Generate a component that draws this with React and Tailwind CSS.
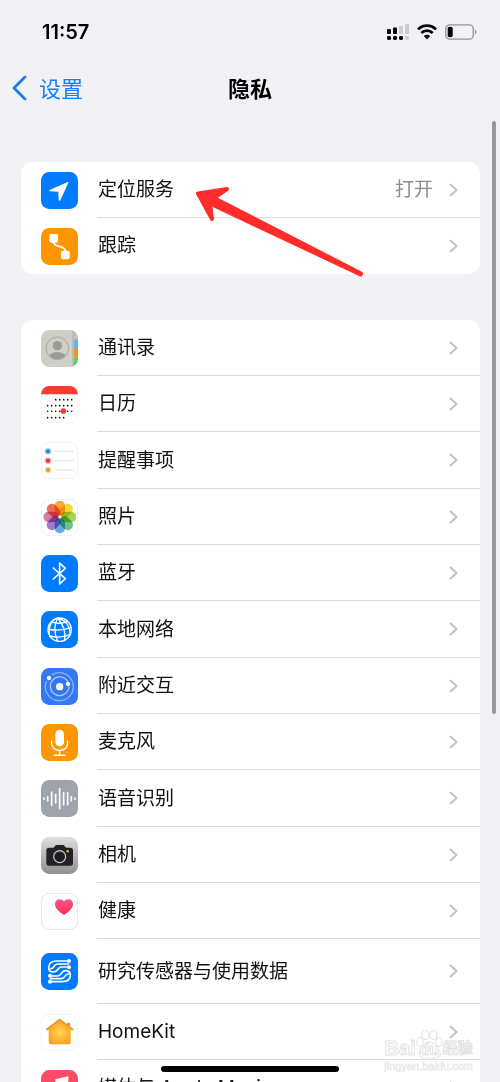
import React from "react";

/* Every app icon is drawn on a 111 x 111 canvas. */
function Tile({ fill, border, children }) {
  return (
    <svg viewBox="0 0 111 111" className="size-[37px] shrink-0" aria-hidden="true">
      <rect x={border ? 1 : 0} y={border ? 1 : 0} width={border ? 109 : 111} height={border ? 109 : 111} rx="25" fill={fill} stroke={border || "none"} strokeWidth="2.5" />
      {children}
    </svg>
  );
}

const LocationIcon = () => (
  <Tile fill="#007aff">
    <path d="M80 30 L26 54 Q23 57 27 58 L52 59 L53 84 Q54 88 58 85 L82 33 Q83 29 80 30Z" fill="#fff" />
  </Tile>
);

const TrackingIcon = () => (
  <Tile fill="#ff9500">
    <rect x="25" y="18" width="26" height="26" rx="6" fill="#fff" />
    <rect x="60" y="68" width="26" height="26" rx="6" fill="#fff" />
    <path d="M38 42 C38 62 72 48 73 70" fill="none" stroke="#fff" strokeWidth="5.5" />
  </Tile>
);

const ContactsIcon = () => (
  <Tile fill="#d0cfc5">
    <clipPath id="contacts-tile"><rect width="111" height="111" rx="25" /></clipPath>
    <clipPath id="contacts-face"><circle cx="49" cy="55" r="32" /></clipPath>
    <g clipPath="url(#contacts-tile)">
      <rect x="96" width="15" height="28" fill="#c2c1b6" />
      <rect x="97" y="28" width="14" height="28" fill="#5bb8f5" />
      <rect x="97" y="56" width="14" height="27" fill="#ff9218" />
      <rect x="97" y="83" width="14" height="28" fill="#52cf68" />
      <rect x="94" width="3" height="111" fill="#b9b8ae" />
    </g>
    <circle cx="49" cy="55" r="34" fill="#d0cfc7" stroke="#9b9b96" strokeWidth="2.5" />
    <g clipPath="url(#contacts-face)" fill="#9b9b98">
      <circle cx="49" cy="47" r="14" />
      <ellipse cx="49" cy="83" rx="27" ry="17" />
    </g>
  </Tile>
);

const CALENDAR_DOTS = [
  [41, [44, 56, 68, 80, 92]],
  [59, [20, 32, 44, 56, 68, 80, 92]],
  [76, [20, 32, 44, 56, 80, 92]],
  [95, [20, 32, 44, 56, 68]],
];

const CalendarIcon = () => (
  <Tile fill="#fff" border="#f0f0f0">
    <path d="M0 25 A25 25 0 0 1 25 0 H86 A25 25 0 0 1 111 25Z" fill="#fb3b30" />
    {CALENDAR_DOTS.map(([y, xs]) => xs.map((x) => <circle key={`${x}-${y}`} cx={x} cy={y} r="2.5" fill="#111" />))}
    <circle cx="67" cy="75" r="8.5" fill="#f43c35" />
  </Tile>
);

const RemindersIcon = () => (
  <Tile fill="#fff" border="#ececec">
    {[[28, "#2586dc"], [56, "#e5383b"], [84, "#f0a020"]].map(([y, color]) => (
      <g key={y}>
        <circle cx="21" cy={y} r="10" fill={color} opacity="0.35" />
        <circle cx="21" cy={y} r="6.5" fill={color} />
        <path d={`M42 ${y}H98`} stroke="#d9d9dc" strokeWidth="2.5" />
      </g>
    ))}
  </Tile>
);

const PETALS = ["#fb9a1c", "#ecd914", "#98cb3b", "#52b878", "#5298dc", "#8c6cbf", "#cb639b", "#f15540"];

const PhotosIcon = () => (
  <Tile fill="#fff" border="#ececec">
    {PETALS.map((color, i) => (
      <rect key={color} x="41" y="5" width="31" height="45" rx="15" fill={color} opacity="0.86" transform={`rotate(${i * 45} 56.5 54)`} style={{ mixBlendMode: "multiply" }} />
    ))}
  </Tile>
);

const BluetoothIcon = () => (
  <Tile fill="#007aff">
    <path d="M37 39 L73 71 L56 87 V24 L73 40 L37 72" fill="none" stroke="#fff" strokeWidth="5" strokeLinejoin="round" strokeLinecap="round" />
  </Tile>
);

const NetworkIcon = () => (
  <Tile fill="#007aff">
    <g fill="none" stroke="#fff" strokeWidth="4">
      <circle cx="56" cy="56" r="35" />
      <path d="M50 21 C38 42 39 65 50 91 M50 21 C66 39 76 66 70 88 M50 21 C27 30 20 55 27 76 M50 21 C74 27 88 46 87 71" />
      <path d="M31 32 Q54 42 80 31 M21 54 Q53 63 91 49 M25 75 Q58 83 87 71" />
    </g>
  </Tile>
);

const NearbyIcon = () => (
  <Tile fill="#3478f6">
    <g fill="none" strokeWidth="4" strokeLinecap="round">
      <path d="M34 20 A42 42 0 1 1 16 41" stroke="#8db5fa" />
      <path d="M80 40 A28 28 0 1 0 84 57" stroke="#a8c7fb" />
    </g>
    <g fill="#fff">
      <circle cx="56" cy="56" r="11" />
      <circle cx="24" cy="30" r="6.5" />
      <circle cx="81" cy="48" r="6.5" />
    </g>
  </Tile>
);

const MicrophoneIcon = () => (
  <Tile fill="#ff9500">
    <rect x="43" y="17" width="26" height="50" rx="13" fill="#fff" />
    <path d="M32 52 V57 C32 87 80 87 80 57 V52 M56 80 V93 M40 94 H72" fill="none" stroke="#fff" strokeWidth="4.5" strokeLinecap="round" />
  </Tile>
);

const WAVE = [[9, 2], [20, 6], [32, 20], [44, 13], [56, 30], [68, 18], [80, 18], [91, 6], [102, 2]];

const SpeechIcon = () => (
  <Tile fill="#9fa3ae">
    {WAVE.map(([x, h]) => (
      <path key={x} d={`M${x} ${56 - h}V${56 + h}`} stroke="#fff" strokeWidth="5" strokeLinecap="round" />
    ))}
  </Tile>
);

const CameraIcon = () => (
  <Tile fill="url(#camera-bg)">
    <linearGradient id="camera-bg" x1="0" y1="0" x2="0" y2="1">
      <stop stopColor="#dedee1" />
      <stop offset="1" stopColor="#909094" />
    </linearGradient>
    <path d="M24 32 H36 Q40 32 42 27 Q43 24 47 24 H66 Q69 24 71 28 Q73 32 77 32 H88 Q96 32 96 40 V78 Q96 86 88 86 H24 Q16 86 16 78 V40 Q16 32 24 32Z" fill="#222225" />
    <circle cx="56" cy="59" r="18" fill="#28282b" stroke="#d0d0d2" strokeWidth="3.5" />
    <circle cx="56" cy="59" r="12" fill="#1d1d20" />
    <circle cx="80" cy="43" r="3.8" fill="#f4ad19" />
  </Tile>
);

const HealthIcon = () => (
  <Tile fill="#fff" border="#dedee0">
    <linearGradient id="heart" x1="0" y1="0" x2="0" y2="1">
      <stop stopColor="#fb568f" />
      <stop offset="1" stopColor="#ff2d46" />
    </linearGradient>
    <path d="M69 66 C54 56 42 46 42 33 C42 17 61 14 69 26 C77 14 96 17 96 33 C96 46 84 56 69 66Z" fill="url(#heart)" />
  </Tile>
);

const ResearchIcon = () => (
  <Tile fill="#007aff">
    <g fill="none" stroke="#fff" strokeWidth="5" strokeLinecap="round">
      <path d="M83 24 H48 C29 24 23 34 23 44 C23 55 31 57 38 57 C52 57 48 42 62 42 H83" />
      <path d="M83 33 H52 C34 33 43 48 29 47" />
      <path d="M28 86 H63 C82 86 88 76 88 66 C88 55 80 53 73 53 C59 53 63 69 49 69 H28" />
      <path d="M28 77 H59 C77 77 68 62 82 63" />
    </g>
    <g fill="#fff">
      <circle cx="84" cy="24" r="6" />
      <circle cx="84" cy="43" r="6" />
      <circle cx="27" cy="68" r="6" />
      <circle cx="27" cy="86" r="6" />
    </g>
  </Tile>
);

const HomeIcon = () => (
  <Tile fill="#fff" border="#f0f0f0">
    <radialGradient id="house" cx="0.5" cy="0.55" r="0.55">
      <stop stopColor="#ffd75a" />
      <stop offset="0.55" stopColor="#ffb52d" />
      <stop offset="1" stopColor="#f69a20" />
    </radialGradient>
    <path d="M78 26 H87 V42 L78 34Z" fill="#e69532" />
    <path d="M53 16 Q56 14 59 16 L97 46 Q95 51 89 48 V83 Q89 91 81 91 H31 Q23 91 23 83 V48 Q17 51 15 46Z" fill="url(#house)" />
    <path d="M17 46 L56 17 L95 46" fill="none" stroke="#e79a3b" strokeWidth="5" strokeLinecap="round" strokeLinejoin="round" />
  </Tile>
);

const MusicIcon = () => (
  <Tile fill="#fb4b66">
    <path d="M43 28 L82 19 V74 A12 10 0 1 1 75 64 V39 L50 45 V82 A12 10 0 1 1 43 72Z" fill="#fff" />
  </Tile>
);

const LOCATION_ROWS = [
  { label: "定位服务", icon: LocationIcon, value: "打开" },
  { label: "跟踪", icon: TrackingIcon },
];

const APP_ROWS = [
  { label: "通讯录", icon: ContactsIcon },
  { label: "日历", icon: CalendarIcon },
  { label: "提醒事项", icon: RemindersIcon },
  { label: "照片", icon: PhotosIcon },
  { label: "蓝牙", icon: BluetoothIcon },
  { label: "本地网络", icon: NetworkIcon },
  { label: "附近交互", icon: NearbyIcon },
  { label: "麦克风", icon: MicrophoneIcon },
  { label: "语音识别", icon: SpeechIcon },
  { label: "相机", icon: CameraIcon },
  { label: "健康", icon: HealthIcon },
  { label: "研究传感器与使用数据", icon: ResearchIcon, tall: true },
  { label: "HomeKit", icon: HomeIcon },
  { label: "媒体与 Apple Music", icon: MusicIcon },
];

function SettingsList({ rows }) {
  return (
    <ul className="ml-[21px] mr-5 overflow-hidden rounded-xl bg-white">
      {rows.map(({ label, icon: Icon, value, tall }) => (
        <li key={label} className={tall ? "group h-[65px]" : "group h-14 nth-[3n]:h-[57px]"}>
          <a href="#" className="flex h-full items-center pl-5">
            <Icon />
            <span className="ml-[19px] flex h-full flex-1 items-center border-b border-[#dcdcdf] pr-[22px] group-last:border-transparent">
              <span className="flex-1 pl-px pt-0.5 text-[19px] text-[#111]">{label}</span>
              {value && <span className="mr-4 pt-0.5 text-[19px] text-[#8a8a8e]">{value}</span>}
              <svg viewBox="0 0 9 14" className="h-3.5 w-[9px]" fill="none" stroke="#c2c2c6" strokeWidth="2" aria-hidden="true">
                <path d="M1 1l6.5 6L1 13" />
              </svg>
            </span>
          </a>
        </li>
      ))}
    </ul>
  );
}

function StatusBar() {
  return (
    <div className="flex h-16 items-center justify-between pl-[42px] pr-[23px]">
      <span className="font-[Inter] text-xl font-semibold text-black">11:57</span>
      <div className="flex items-center gap-2">
        <svg viewBox="0 0 22 16" className="h-4 w-[22px]" aria-hidden="true">
          <g fill="#050505">
            <rect y="5" width="4" height="5" rx="1" />
            <rect x="6" y="3.5" width="4" height="6.5" rx="1" />
            <rect y="12" width="4" height="4" rx="1.4" />
            <rect x="6" y="12" width="4" height="4" rx="1.4" />
            <rect x="12" y="12" width="4" height="4" rx="1.4" />
          </g>
          <g fill="#cdcdd1">
            <rect x="12" y="2" width="4" height="8" rx="1" />
            <rect x="18" y="0" width="4" height="10" rx="1" />
            <rect x="18" y="12" width="4" height="4" rx="1.4" />
          </g>
        </svg>
        <svg viewBox="0 0 20 16" className="h-4 w-5" fill="none" stroke="#050505" strokeWidth="2.7" aria-hidden="true">
          <path d="M1 5.4C6 .4 14 .4 19 5.4M4.3 9C7.5 5.8 12.5 5.8 15.7 9" />
          <path d="M10 15.5L6.8 12C8.6 10.3 11.4 10.3 13.2 12Z" fill="#050505" stroke="none" />
        </svg>
        <svg viewBox="0 0 32 16" className="h-4 w-8" aria-hidden="true">
          <rect x=".8" y=".8" width="27.5" height="14.4" rx="4" fill="none" stroke="#929297" strokeWidth="1.3" />
          <rect x="2.7" y="2.8" width="5" height="10.4" rx="1.8" fill="#050505" />
          <path d="M30 5.5Q33 8 30 10.5Z" fill="#929297" />
        </svg>
      </div>
    </div>
  );
}

function Watermark() {
  return (
    <div className="pointer-events-none absolute bottom-2.5 right-[27px] flex flex-col items-center font-['Liberation_Sans','Noto_Sans_CJK_SC',sans-serif] text-white" aria-hidden="true">
      <div className="flex items-center text-xl leading-6 font-bold [-webkit-text-stroke:1px_#e2e2e4]">
        <span>Bai</span>
        <span className="relative flex h-6 w-[27px] items-center justify-center text-base">
          <svg viewBox="0 0 26 30" className="absolute bottom-0 left-0 h-[30px] w-[27px]" fill="#fff" stroke="#e2e2e4">
            <ellipse cx="3.5" cy="12" rx="3" ry="4.5" />
            <ellipse cx="9" cy="5" rx="3.5" ry="4.5" />
            <ellipse cx="17" cy="5" rx="3.5" ry="4.5" />
            <ellipse cx="22.5" cy="12" rx="3" ry="4.5" />
            <path d="M13 12C7 12 7 18 4 20C0 24 4 29 9 28H17C23 29 26 24 22 20C19 18 19 12 13 12Z" />
          </svg>
          <span className="relative pt-1">du</span>
        </span>
        <span className="text-[15px]">经验</span>
      </div>
      <span className="text-[11px] leading-3 [-webkit-text-stroke:1px_#ececee]">jingyan.baidu.com</span>
    </div>
  );
}

export default function App() {
  return (
    <div className="relative flex h-screen flex-col overflow-hidden bg-[#f1f1f6] font-[Inter,'Noto_Sans_CJK_SC',sans-serif]">
      <StatusBar />
      <header className="grid h-12 grid-cols-3 items-center px-3">
        <a href="#" className="flex items-center gap-3 text-[22px] text-[#147efb]">
          <svg viewBox="0 0 15 26" className="h-[26px] w-[15px]" fill="none" stroke="#147ee9" strokeWidth="2.8" strokeLinecap="round" strokeLinejoin="round" aria-hidden="true">
            <path d="M13 2L2 13l11 11" />
          </svg>
          <span className="pt-0.5">设置</span>
        </a>
        <h1 className="pt-0.5 text-center text-[22px] font-bold text-black">隐私</h1>
      </header>
      <main className="relative flex flex-1 flex-col gap-[46px] overflow-hidden pt-[50px]">
        <div className="relative shrink-0">
          <SettingsList rows={LOCATION_ROWS} />
          <svg viewBox="0 0 170 92" className="pointer-events-none absolute left-[196px] top-6 h-[92px] w-[170px]" fill="#fe2d2b" stroke="#fe2d2b" strokeWidth="4" strokeLinejoin="round" aria-hidden="true">
            <path d="M2 7.500L31 3L18 12L165 87.500L164.500 88.500L14 17.500L16 33Z" />
          </svg>
        </div>
        <div className="shrink-0">
          <SettingsList rows={APP_ROWS} />
        </div>
      </main>
      <div className="absolute right-1 top-[121px] h-[593px] w-1 rounded-full bg-[#98989d]" />
      <Watermark />
      <div className="absolute bottom-2.5 left-1/2 h-1.5 w-[178px] -translate-x-1/2 rounded-full bg-black" />
    </div>
  );
}
